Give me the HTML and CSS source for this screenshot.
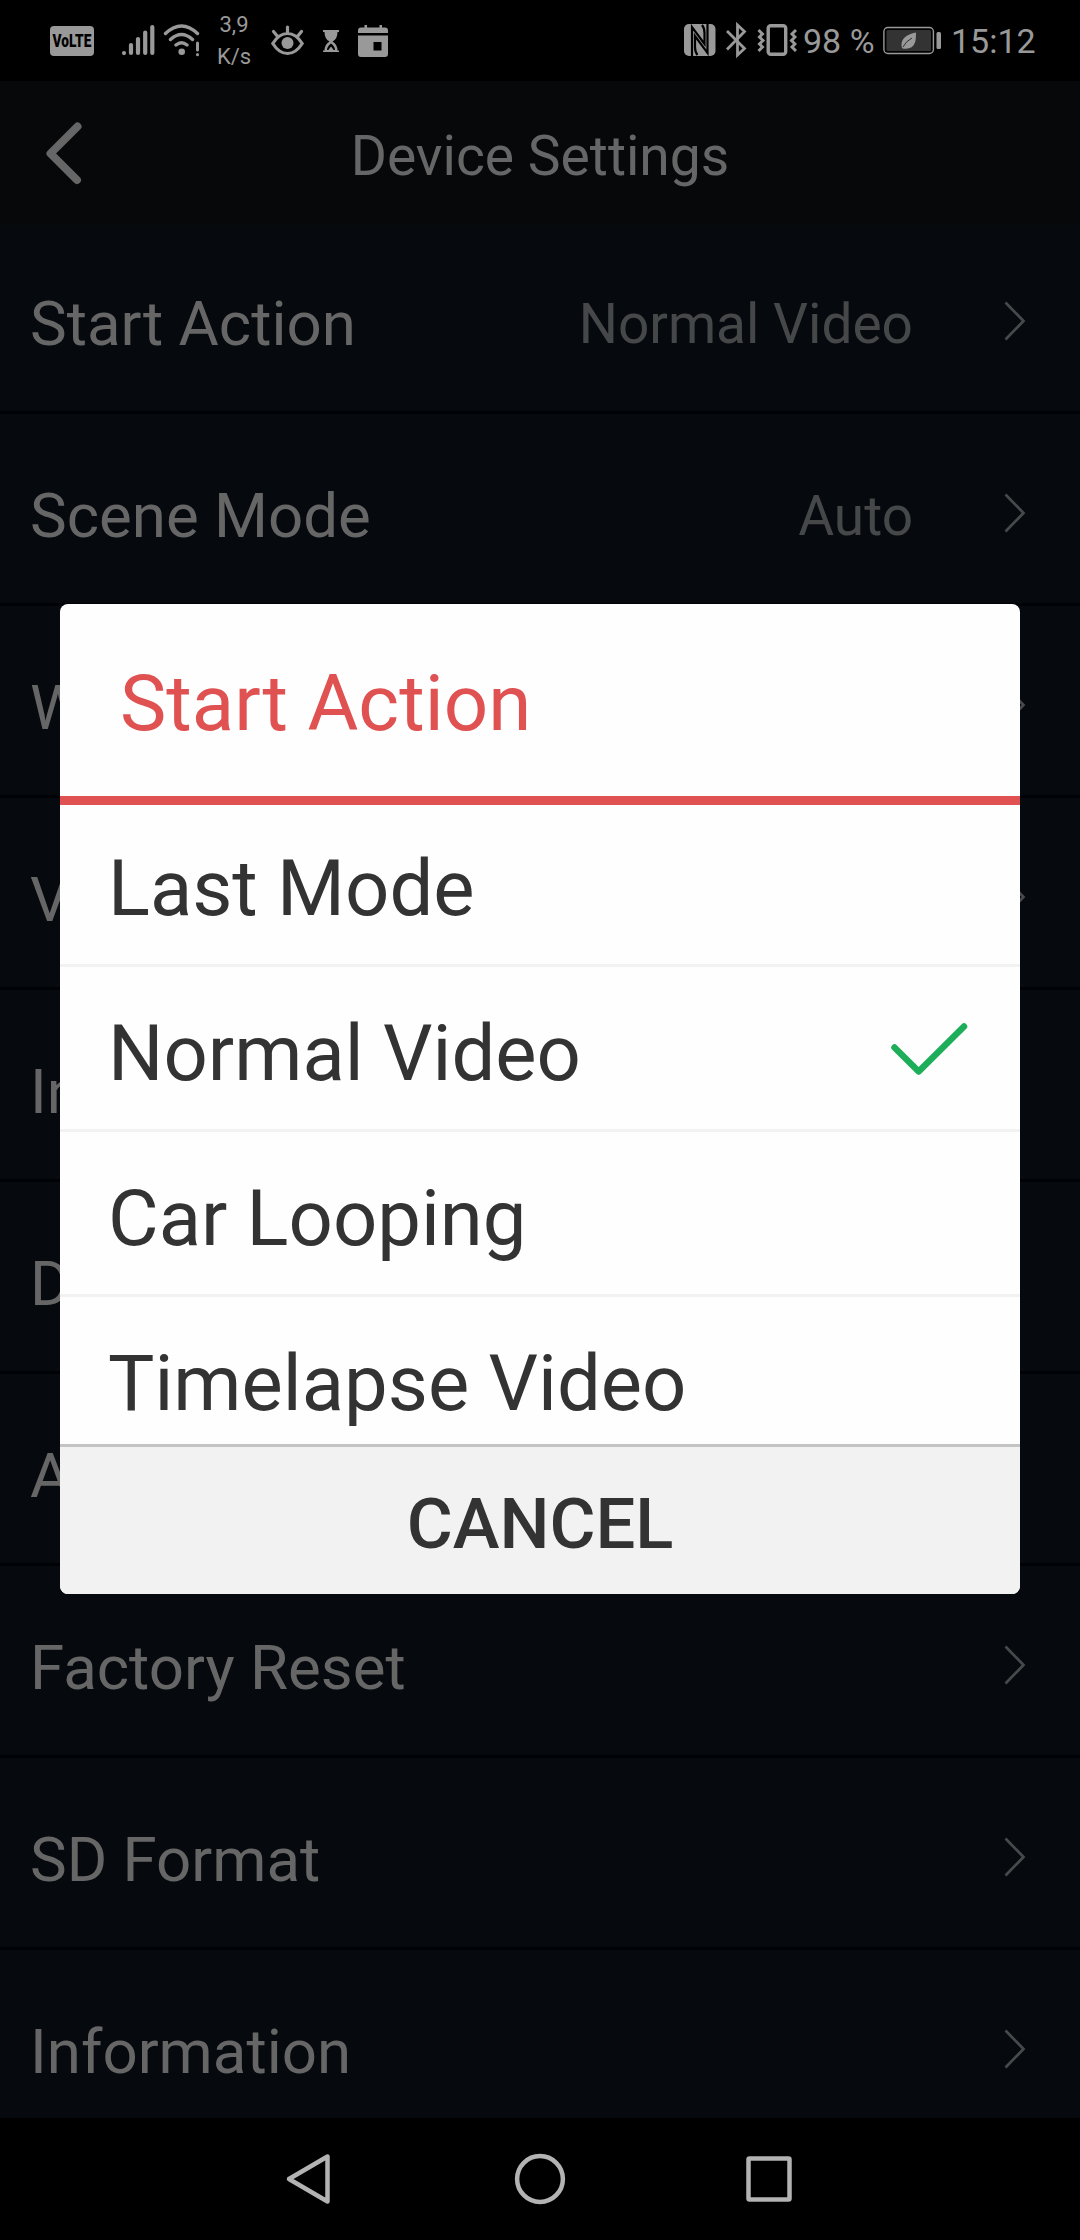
FILE: index.html
```html
<!DOCTYPE html>
<html lang="en">
  <head>
    <meta charset="UTF-8" />
    <meta name="viewport" content="width=device-width, initial-scale=1.0" />
    <title>Device Settings</title>
    <link rel="stylesheet" href="styles.css">
  </head>
  <body>
    <div class="statusbar">
      <span class="volte"><span>VoLTE</span></span>
      <svg class="signal" width="34" height="37" viewBox="0 0 34 37">
        <path class="line" stroke-width="4.2" stroke-linecap="round" d="M3 31v.1M10 23v8M17 17v14M24.2 10.500v20.500M31.300 5v26" />
      </svg>
      <svg class="wifi" width="38" height="37" viewBox="0 0 38 37">
        <path class="line" stroke-width="3.4" stroke-linecap="round" d="M2.500 11.500Q18.500 -3.500 34.500 11.500M7.500 17.500Q18.500 7.500 29.500 17.500M13 23Q18.500 18.500 24 23" />
        <circle cx="18.700" cy="29.700" r="3.300" />
        <path class="line" stroke-width="3" stroke-linecap="round" d="M34.500 21v7M34.500 32.500v.3" />
      </svg>
      <div class="speed">3,9<br />K/s</div>
      <svg class="eye" width="35" height="37" viewBox="0 0 35 37">
        <path class="line" stroke-width="3.200" stroke-linecap="round" d="M2.800 21.500Q9 11.500 17.500 11.500T32.200 21.500Q26 31.500 17.500 31.500T2.800 21.500ZM17.500 5v6M3.500 9.500l4.500 5.500M31.500 9.500l-4.500 5.500" />
        <circle cx="17.500" cy="21" r="6" />
      </svg>
      <svg class="hourglass" width="18" height="37" viewBox="0 0 18 37">
        <path d="M1 8h16v2h-1.500q0 7-5 9.500q5 3 5 9H17v1.500H1v-1.500h1.500q0-6 5-9q-5-2.500-5-9.500H1z" />
        <path class="hole" d="M9 21.500q-4 3-4 6.500h1.300l2.700-3.500l2.700 3.500H13q0-3.500-4-6.500z" />
      </svg>
      <svg class="calendar" width="30" height="37" viewBox="0 0 30 37">
        <path d="M3 5.500h3.500V3H9v2.500h12.500V3H24v2.500h3q3 0 3 3V11H0V8.500q0-3 3-3zM0 13.500h30V32q0 3-3 3H3q-3 0-3-3z" />
        <rect class="hole" x="15.500" y="20" width="8" height="8.500" />
      </svg>
      <div class="statusbar-right">
        <svg class="nfc" width="32" height="37" viewBox="0 0 32 37">
          <rect x="0" y="2" width="31.500" height="32" rx="5" />
          <path class="cut" stroke-width="2.200" d="M8 34V5L20.500 22V11Q20.500 6 18 3M23.500 2V31L11 14V25Q11 30 13.500 33" />
        </svg>
        <svg class="bluetooth" width="21" height="37" viewBox="0 0 21 37">
          <path class="line" stroke-width="2.800" d="M1 9l17.500 17.500l-7 6.500V3l7 6.500L1 27.500" />
        </svg>
        <svg class="vibrate" width="40" height="37" viewBox="0 0 40 37">
          <rect class="line" stroke-width="3.400" x="11.200" y="3.700" width="17.500" height="28.600" rx="2.500" />
          <path class="line" stroke-width="3" d="M1.500 8l4 4l-3 3l3.500 3.500l-3.500 3.500l3 3l-4 4M39 8l-4 4l3 3l-3.500 3.500l3.500 3.500l-3 3l4 4" />
        </svg>
        <span class="percent">98 %</span>
        <svg class="battery" width="58" height="37" viewBox="0 0 58 37">
          <rect class="line" stroke-width="1.400" x=".9" y="5.500" width="49.500" height="26" rx="4" />
          <rect class="charge" x="3.500" y="8" width="44.500" height="21" rx="1.500" />
          <path d="M33 10.500q-15 3-14.500 13q0 2 1 3q10 1.500 12.500-6q1-3 1-10z" />
          <path class="vein" d="M20 25q3-6 9-9" />
          <rect x="53.500" y="10" width="4.500" height="17" rx="1.500" />
        </svg>
        <span class="clock">15:12</span>
      </div>
    </div>

    <div class="header">
      <svg class="back" width="44" height="72" viewBox="0 0 44 72">
        <path d="M35.500 9.500L8.500 36.500l26.500 26.500" />
      </svg>
      <h1>Device Settings</h1>
    </div>

    <div class="settings">
      <div class="row">
        <span class="label">Start Action</span>
        <span class="value">Normal Video</span>
        <svg class="arrow" viewBox="0 0 22 40"><path d="M1.500 1.500L19.500 20L1.500 38.500" /></svg>
      </div>
      <div class="row">
        <span class="label">Scene Mode</span>
        <span class="value">Auto</span>
        <svg class="arrow" viewBox="0 0 22 40"><path d="M1.500 1.500L19.500 20L1.500 38.500" /></svg>
      </div>
      <div class="row">
        <span class="label">W</span>
        <svg class="arrow" viewBox="0 0 22 40"><path d="M1.500 1.500L19.500 20L1.500 38.500" /></svg>
      </div>
      <div class="row">
        <span class="label">V</span>
        <svg class="arrow" viewBox="0 0 22 40"><path d="M1.500 1.500L19.500 20L1.500 38.500" /></svg>
      </div>
      <div class="row"><span class="label">In</span></div>
      <div class="row"><span class="label">D</span></div>
      <div class="row"><span class="label">A</span></div>
      <div class="row">
        <span class="label">Factory Reset</span>
        <svg class="arrow" viewBox="0 0 22 40"><path d="M1.500 1.500L19.500 20L1.500 38.500" /></svg>
      </div>
      <div class="row">
        <span class="label">SD Format</span>
        <svg class="arrow" viewBox="0 0 22 40"><path d="M1.500 1.500L19.500 20L1.500 38.500" /></svg>
      </div>
      <div class="row">
        <span class="label">Information</span>
        <svg class="arrow" viewBox="0 0 22 40"><path d="M1.500 1.500L19.500 20L1.500 38.500" /></svg>
      </div>
    </div>

    <div class="navbar">
      <svg width="52" height="52" viewBox="0 0 52 52"><path d="M42.500 3.500v45L4 26z" /></svg>
      <svg width="52" height="52" viewBox="0 0 52 52"><circle cx="26" cy="26" r="22.900" /></svg>
      <svg width="52" height="52" viewBox="0 0 52 52"><rect x="5.500" y="5.500" width="41" height="41" rx="1" /></svg>
    </div>

    <div class="dialog">
      <h2>Start Action</h2>
      <ul class="options">
        <li>Last Mode</li>
        <li>
          Normal Video
          <svg class="check" width="78" height="54" viewBox="0 0 78 54">
            <path d="M4.500 25.500L28.700 49.500L74 4.500" />
          </svg>
        </li>
        <li>Car Looping</li>
        <li>Timelapse Video</li>
      </ul>
      <button type="button" class="cancel">CANCEL</button>
    </div>
  </body>
</html>
```

FILE: styles.css
```css
* {
  box-sizing: border-box;
}

body {
  position: relative;
  display: flex;
  flex-direction: column;
  width: 1080px;
  height: 2240px;
  margin: 0;
  overflow: hidden;
  background-color: #000;
  font-family: Roboto, sans-serif;
}

svg {
  display: block;
  flex: none;
}

/* status bar */
.statusbar {
  display: flex;
  align-items: center;
  height: 81px;
  padding: 0 45px 0 50px;
  color: #999;
  fill: #999;
}

.statusbar .line {
  fill: none;
  stroke: #999;
}

.statusbar .hole {
  fill: #000;
}

.statusbar .cut {
  fill: none;
  stroke: #000;
}

.volte {
  display: flex;
  align-items: center;
  justify-content: center;
  width: 44px;
  height: 30px;
  border-radius: 4px;
  background-color: #999;
  color: #000;
  font-size: 19px;
  font-weight: 900;
  line-height: 30px;
}

.volte span {
  transform: scaleX(0.72);
}

.signal {
  margin-left: 27px;
}

.wifi {
  margin-left: 8px;
}

.speed {
  width: 36px;
  margin: 0 18px 0 15px;
  font-size: 22px;
  line-height: 32px;
  text-align: center;
}

.hourglass {
  margin: 0 18px 0 17px;
}

.statusbar-right {
  display: flex;
  align-items: center;
  margin-left: auto;
}

.bluetooth {
  margin: 0 10px;
}

.percent,
.clock {
  font-size: 34px;
  line-height: 40px;
  white-space: nowrap;
}

.percent {
  width: 80px;
  margin-left: 6px;
}

.battery .charge {
  fill: #333;
}

.battery .vein {
  fill: none;
  stroke: #333;
}

.clock {
  width: 84px;
  margin-left: 10px;
}

/* title bar */
.header {
  display: flex;
  align-items: center;
  height: 144px;
  padding: 0 42px;
  background-color: #070809;
}

.header h1 {
  flex: 1;
  margin: 0 44px 0 0;
  padding-top: 6px;
  color: #666;
  font-size: 55.2px;
  font-weight: 400;
  text-align: center;
}

.back path {
  fill: none;
  stroke: #666;
  stroke-width: 8;
  stroke-linecap: round;
  stroke-linejoin: round;
}

/* list of settings */
.settings {
  flex: 1;
  overflow: hidden;
  background-color: #060a0e;
}

.row {
  display: flex;
  align-items: center;
  height: 192px;
  padding: 14px 54px 0 30px;
  border-bottom: 3px solid #000206;
}

.row:first-child {
  height: 189px;
  padding-top: 11px;
}

.label {
  flex: 1;
  color: #666;
  font-size: 61.8px;
}

.value {
  color: #464749;
  font-size: 55px;
}

.arrow {
  width: 22px;
  height: 40px;
  margin: 0 0 5px 91px;
}

.arrow path {
  fill: none;
  stroke: #48494b;
  stroke-width: 2.7;
}

/* navigation keys */
.navbar {
  display: flex;
  justify-content: center;
  gap: 177px;
  height: 122px;
  padding-top: 35px;
}

.navbar svg {
  fill: none;
  stroke: #b3b3b3;
  stroke-width: 4.5;
  stroke-linejoin: round;
}

/* dialog over the list */
.dialog {
  position: absolute;
  top: 604px;
  left: 60px;
  width: 960px;
  height: 990px;
  display: flex;
  flex-direction: column;
  overflow: hidden;
  border-radius: 8px;
  background-color: #fefefe;
}

.dialog h2 {
  height: 201px;
  margin: 0;
  padding: 7px 60px 0;
  border-bottom: 9px solid #e05252;
  color: #e05252;
  font-size: 78px;
  font-weight: 400;
  line-height: 185px;
}

.options {
  flex: 1;
  margin: 0;
  padding: 0;
  overflow: hidden;
  list-style: none;
}

.options li {
  display: flex;
  align-items: center;
  justify-content: space-between;
  height: 165px;
  padding: 11px 52px 0 48px;
  border-bottom: 3px solid #f2f2f2;
  color: #333;
  font-size: 77.8px;
}

.options li:first-child {
  height: 162px;
  padding-top: 8px;
}

.check {
  margin-bottom: 10px;
}

.check path {
  fill: none;
  stroke: #1eae5a;
  stroke-width: 6.5;
  stroke-linecap: round;
  stroke-linejoin: round;
}

.cancel {
  height: 150px;
  padding: 6px 0 0;
  border: 0;
  border-top: 3px solid #c4c4c4;
  background-color: #f2f2f2;
  color: #333;
  font-family: inherit;
  font-size: 70.5px;
  font-weight: 500;
}
```
